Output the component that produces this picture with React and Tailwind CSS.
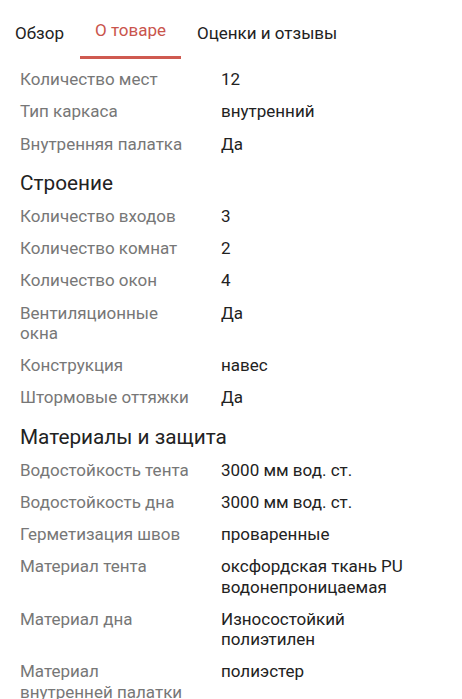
const Row = ({ label, value }) => (
    <div className="flex py-[6px] leading-[20.25px]">
        <div className="w-[201px] shrink-0 pr-[30px] text-[#777777]">{label}</div>
        <div className="flex-1 pr-4 text-[#222222]">{value}</div>
    </div>
)

const Heading = ({ children }) => (
    <h2 className="pt-[10px] pb-[4px] text-[20.75px] leading-[26px] text-[#222222]">{children}</h2>
)

const App = () => {
    return (
        <section className="w-full min-h-screen bg-white overflow-hidden font-['Roboto',sans-serif] text-[17px]">
            <nav className="flex items-end h-[59px]">
                <button className="px-[15px] pb-[13px] text-[#222222]">Обзор</button>
                <button className="ml-[1px] w-[101px] pb-[13px] text-[#c9544c] border-b-[3px] border-[#cf5a50] pt-[3px]">О товаре</button>
                <button className="px-[16px] pb-[13px] text-[#222222]">Оценки и отзывы</button>
            </nav>
            <main className="px-5 pt-[4px]">
                <Row label="Количество мест" value="12" />
                <Row label="Тип каркаса" value="внутренний" />
                <Row label="Внутренняя палатка" value="Да" />
                <Heading>Строение</Heading>
                <Row label="Количество входов" value="3" />
                <Row label="Количество комнат" value="2" />
                <Row label="Количество окон" value="4" />
                <Row label="Вентиляционные окна" value="Да" />
                <Row label="Конструкция" value="навес" />
                <Row label="Штормовые оттяжки" value="Да" />
                <Heading>Материалы и защита</Heading>
                <Row label="Водостойкость тента" value="3000 мм вод. ст." />
                <Row label="Водостойкость дна" value="3000 мм вод. ст." />
                <Row label="Герметизация швов" value="проваренные" />
                <Row label="Материал тента" value="оксфордская ткань PU водонепроницаемая" />
                <Row label="Материал дна" value="Износостойкий полиэтилен" />
                <Row label="Материал внутренней палатки" value="полиэстер" />
            </main>
        </section>
    )
}

export default App
